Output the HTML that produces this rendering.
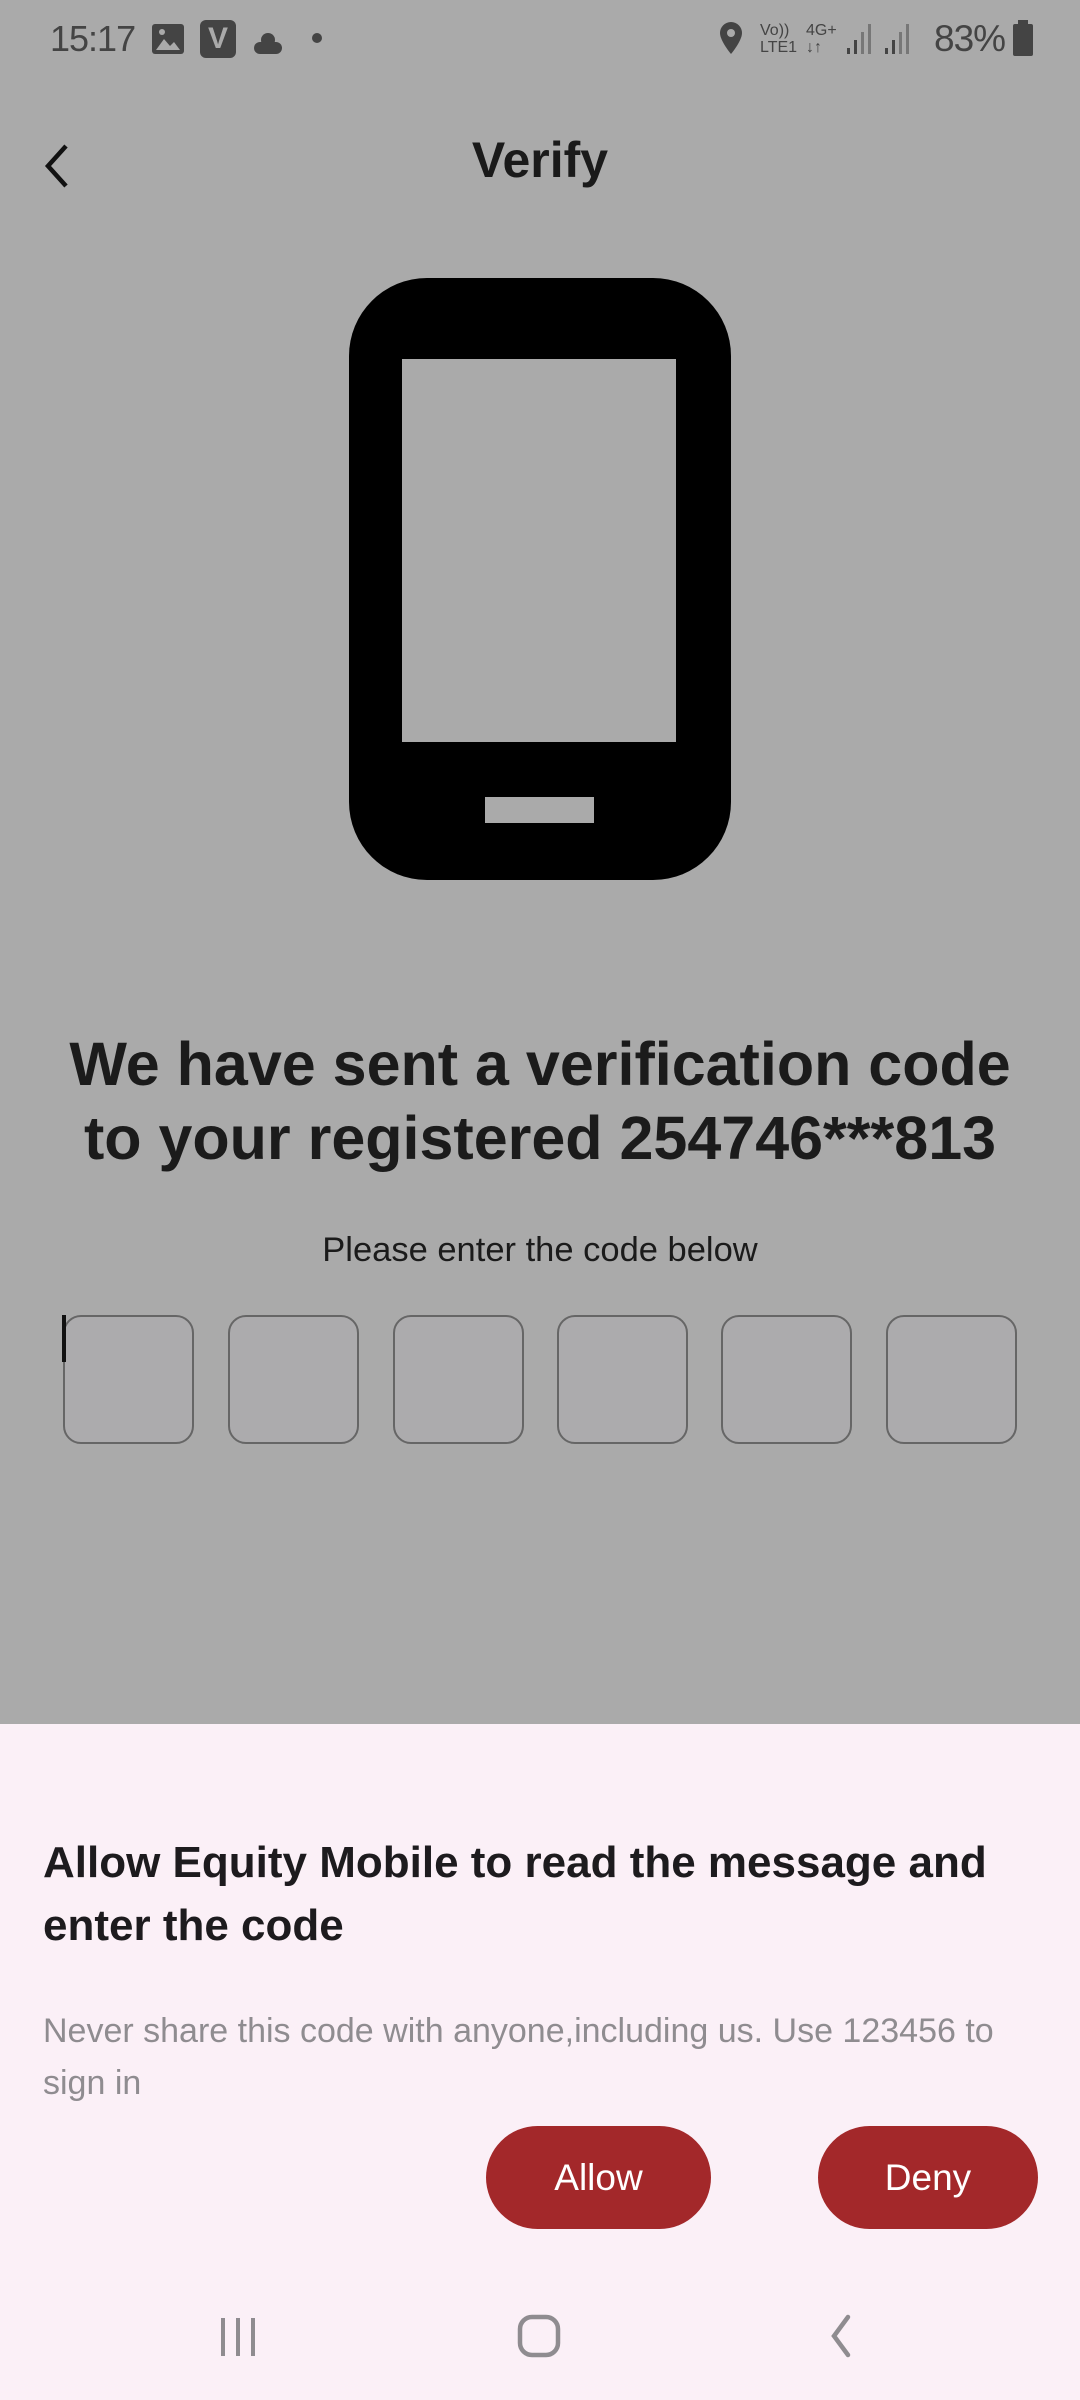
<!DOCTYPE html>
<html><head><meta charset="utf-8"><style>
*{margin:0;padding:0;box-sizing:border-box}
body{width:1080px;height:2400px;background:#aaaaaa;position:relative;overflow:hidden;font-family:"Liberation Sans",sans-serif}
.abs{position:absolute}
.box{position:absolute;top:1315px;width:131px;height:129px;border:2.5px solid #666;border-radius:18px;background:#acabad}
.btn{position:absolute;top:2126px;height:103px;background:#a3282a;border-radius:52px;color:#fff;font-size:37px;display:flex;align-items:center;justify-content:center}
</style></head><body>
<div class="abs" style="left:50px;top:18px;font-size:36px;color:#444;letter-spacing:-1px">15:17</div>
<svg class="abs" style="left:150px;top:22px" width="36" height="34"><rect x="2" y="2" width="32" height="30" rx="3" fill="#444"/><path d="M6 28 L14 17 L20 24 L24 20 L30 28Z" fill="#aaa"/><circle cx="12" cy="10" r="3" fill="#aaa"/></svg>
<div class="abs" style="left:200px;top:20px;width:36px;height:38px;background:#444;border-radius:6px;color:#aaa;font-weight:bold;font-size:30px;text-align:center;line-height:38px">V</div>
<svg class="abs" style="left:250px;top:22px" width="36" height="34"><circle cx="18" cy="18" r="7" fill="#444"/><rect x="4" y="20" width="28" height="12" rx="6" fill="#444"/></svg>
<div class="abs" style="left:312px;top:33px;width:10px;height:10px;border-radius:50%;background:#444"></div>
<svg class="abs" style="left:718px;top:20px" width="26" height="36"><path d="M13 2a11 11 0 0 0-11 11c0 8 11 21 11 21s11-13 11-21A11 11 0 0 0 13 2z" fill="#444"/><circle cx="13" cy="13" r="4" fill="#aaa"/></svg>
<div class="abs" style="left:760px;top:22px;font-size:16px;line-height:17px;color:#444">Vo))<br>LTE1</div>
<div class="abs" style="left:806px;top:22px;font-size:16px;line-height:17px;color:#444">4G+<br>↓↑</div>
<svg class="abs" style="left:845px;top:22px" width="70" height="34"><rect x="2" y="26" width="3" height="6" fill="#444"/><rect x="9" y="18" width="3" height="14" fill="#444"/><rect x="16" y="10" width="3" height="22" fill="#777"/><rect x="23" y="2" width="3" height="30" fill="#777"/><rect x="40" y="26" width="3" height="6" fill="#444"/><rect x="47" y="18" width="3" height="14" fill="#444"/><rect x="54" y="10" width="3" height="22" fill="#777"/><rect x="61" y="2" width="3" height="30" fill="#777"/></svg>
<div class="abs" style="left:934px;top:18px;font-size:37px;color:#444;letter-spacing:-1px">83%</div>
<svg class="abs" style="left:1012px;top:20px" width="22" height="36"><rect x="6" y="0" width="10" height="5" fill="#444"/><rect x="1" y="4" width="20" height="32" rx="2" fill="#444"/></svg>

<svg class="abs" style="left:38px;top:140px" width="40" height="52"><path d="M28 6 L10 26 L28 46" stroke="#111" stroke-width="4.5" fill="none"/></svg>
<div class="abs" style="left:0;width:1080px;top:131px;text-align:center;font-size:50px;font-weight:bold;color:#1a1a1a">Verify</div>

<svg class="abs" style="left:349px;top:278px" width="382" height="602"><rect x="0" y="0" width="382" height="602" rx="78" fill="#000"/><rect x="53" y="81" width="274" height="383" fill="#aaaaaa"/><rect x="136" y="519" width="109" height="26" fill="#aaaaaa"/></svg>

<div class="abs" style="left:0;width:1080px;top:1027px;text-align:center;font-size:61px;line-height:74px;font-weight:bold;color:#1b1b1b">We have sent a verification code<br>to your registered 254746***813</div>
<div class="abs" style="left:0;width:1080px;top:1231px;text-align:center;font-size:34.5px;color:#1b1b1b">Please enter the code below</div>

<div class="box" style="left:63px"></div>
<div class="box" style="left:228px"></div>
<div class="box" style="left:393px"></div>
<div class="box" style="left:557px"></div>
<div class="box" style="left:721px"></div>
<div class="box" style="left:886px"></div>
<div class="abs" style="left:62px;top:1315px;width:4px;height:47px;background:#111"></div>

<div class="abs" style="left:0;top:1724px;width:1080px;height:676px;background:#fbf0f7"></div>
<div class="abs" style="left:43px;top:1831px;font-size:44px;line-height:63px;font-weight:bold;color:#1d1b1e;width:1030px">Allow Equity Mobile to read the message and<br>enter the code</div>
<div class="abs" style="left:43px;top:2005px;font-size:34px;line-height:52px;color:#8f8c90;width:1030px">Never share this code with anyone,including us. Use 123456 to<br>sign in</div>
<div class="btn" style="left:486px;width:225px">Allow</div>
<div class="btn" style="left:818px;width:220px">Deny</div>

<svg class="abs" style="left:215px;top:2312px" width="46" height="48"><path d="M8 6v38M23 6v38M38 6v38" stroke="#8f8c90" stroke-width="4"/></svg>
<svg class="abs" style="left:516px;top:2312px" width="48" height="48"><rect x="4" y="5" width="38" height="38" rx="12" stroke="#8f8c90" stroke-width="4.5" fill="none"/></svg>
<svg class="abs" style="left:822px;top:2312px" width="40" height="48"><path d="M26 5 L12 24 L26 43" stroke="#8f8c90" stroke-width="4.5" fill="none" stroke-linecap="round"/></svg>
</body></html>
